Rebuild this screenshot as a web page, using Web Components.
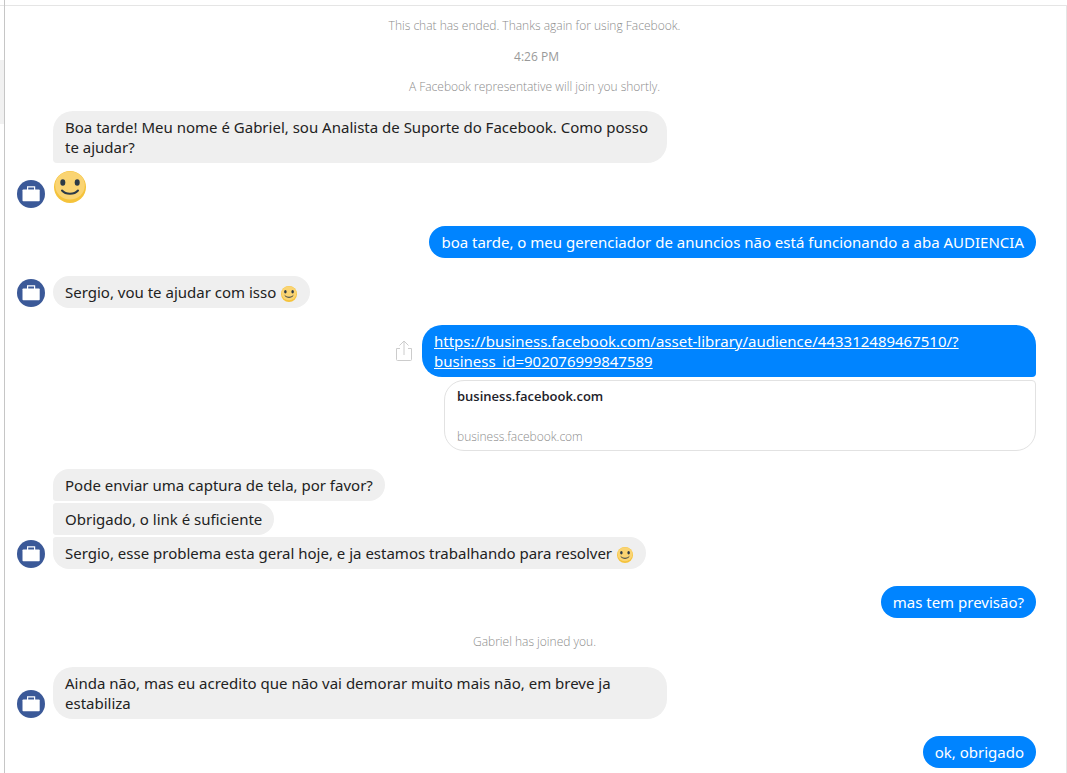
<!DOCTYPE html>
<html lang="pt-BR">
<head>
<meta charset="utf-8">
<meta name="viewport" content="width=device-width, initial-scale=1">
<title>Chat</title>
<style>
  html, body { margin: 0; }
  body {
    background: #fff;
    color: #000;
    font-family: "Noto Sans", "Open Sans", sans-serif;
    font-size: 15px;
    line-height: 20px;
  }
</style>
</head>
<body>
<chat-window>
  <chat-notices>
    <chat-notice>This chat has ended. Thanks again for using Facebook.</chat-notice>
    <chat-notice time>4:26 PM</chat-notice>
    <chat-notice>A Facebook representative will join you shortly.</chat-notice>
  </chat-notices>

  <chat-received>
    <chat-bubble class="first">Boa tarde! Meu nome é Gabriel, sou Analista de Suporte do Facebook. Como posso te ajudar?</chat-bubble>
    <chat-smiley large></chat-smiley>
  </chat-received>

  <chat-sent><chat-bubble sent>boa tarde, o meu gerenciador de anuncios não está funcionando a aba AUDIENCIA</chat-bubble></chat-sent>

  <chat-received>
    <chat-bubble>Sergio, vou te ajudar com isso <chat-smiley></chat-smiley></chat-bubble>
  </chat-received>

  <chat-sent>
    <chat-share slot="action"></chat-share>
    <chat-bubble sent class="first"><a href="https://business.facebook.com/asset-library/audience/443312489467510/?business_id=902076999847589" style="color:inherit">https://business.facebook.com/asset-library/audience/443312489467510/?<wbr>business_id=902076999847589</a></chat-bubble>
    <link-card slot="card" heading="business.facebook.com" source="business.facebook.com"></link-card>
  </chat-sent>

  <chat-received>
    <chat-bubble class="first">Pode enviar uma captura de tela, por favor?</chat-bubble>
    <chat-bubble class="middle">Obrigado, o link é suficiente</chat-bubble>
    <chat-bubble class="last">Sergio, esse problema esta geral hoje, e ja estamos trabalhando para resolver <chat-smiley></chat-smiley></chat-bubble>
  </chat-received>

  <chat-sent><chat-bubble sent>mas tem previsão?</chat-bubble></chat-sent>

  <chat-notice>Gabriel has joined you.</chat-notice>

  <chat-received>
    <chat-bubble>Ainda não, mas eu acredito que não vai demorar muito mais não, em breve ja estabiliza</chat-bubble>
  </chat-received>

  <chat-sent><chat-bubble sent>ok, obrigado</chat-bubble></chat-sent>
</chat-window>

<script>
const define = (name, html, setup) => {
  const template = document.createElement('template');
  template.innerHTML = html;
  customElements.define(name, class extends HTMLElement {
    constructor() {
      super();
      this.attachShadow({ mode: 'open' }).append(template.content.cloneNode(true));
    }
    connectedCallback() { if (setup) setup(this); }
  });
};

define('chat-window', `
  <style>
    :host { display: grid; grid-template-columns: 4px 1fr; min-height: 100vh; }
    .cap { height: 5px; border-bottom: 1px solid #e5e5e5; }
    .thumb { height: 64px; margin-top: 54px; background: #f1f1f1; }
    .panel { display: flex; flex-direction: column; border-left: 1px solid #c6c6c6; min-width: 0; }
    main {
      flex: 1; display: flex; flex-direction: column; gap: 17px;
      padding: 13px 30px 5px 12px; border-right: 1px solid #e5e5e5;
    }
  </style>
  <aside><div class="cap"></div><div class="thumb"></div></aside>
  <div class="panel"><div class="cap"></div><main><slot></slot></main></div>
`);

define('chat-notices', `
  <style>:host { display: flex; flex-direction: column; gap: 16px; margin-bottom: -1px; }</style>
  <slot></slot>
`);

define('chat-notice', `
  <style>
    :host {
      display: block; text-align: center; padding-left: 16px;
      font-family: "Open Sans", "Noto Sans", sans-serif;
      font-size: 12px; line-height: 14px; font-weight: 300; color: #8c8c8c;
    }
    :host([time]) { padding: 1px 0 0 20px; font-weight: 400; color: #999; }
  </style>
  <slot></slot>
`);

define('chat-avatar', `
  <style>:host, svg { display: block; width: 28px; height: 28px; }</style>
  <svg viewBox="0 0 28 28" aria-hidden="true">
    <circle cx="14" cy="14" r="14" fill="#3b5998"/>
    <path d="M10.600 10V6.800h7V10" fill="none" stroke="#fff" stroke-width="1.200"/>
    <rect x="5.500" y="9.400" width="17.200" height="11.800" rx=".8" fill="#fff"/>
  </svg>
`);

define('chat-received', `
  <style>
    :host { display: flex; align-items: flex-end; gap: 8px; padding-top: 1px; color: #222; }
    chat-avatar { flex: none; margin-bottom: 1px; }
    .stack { display: flex; flex-direction: column; align-items: flex-start; gap: 2px; min-width: 0; }
  </style>
  <chat-avatar></chat-avatar>
  <div class="stack"><slot></slot></div>
`);

define('chat-sent', `
  <style>
    :host { display: flex; flex-direction: column; align-items: flex-end; gap: 3px; }
    .row { display: flex; align-items: center; justify-content: flex-end; gap: 9px; max-width: 100%; }
  </style>
  <div class="row"><slot name="action"></slot><slot></slot></div>
  <slot name="card"></slot>
`);

define('chat-bubble', `
  <style>
    :host {
      display: block; box-sizing: border-box; max-width: 614px;
      padding: 6px 12px; border-radius: 20px; background: #efefef;
      overflow-wrap: anywhere;
    }
    :host(.first) { border-bottom-left-radius: 4px; }
    :host(.middle) { border-top-left-radius: 4px; border-bottom-left-radius: 4px; }
    :host(.last) { border-top-left-radius: 4px; }
    :host([sent]) { background: #0084ff; color: #fff; }
    :host([sent].first) { border-bottom-left-radius: 20px; border-bottom-right-radius: 4px; }
  </style>
  <slot></slot>
`);

define('chat-smiley', `
  <style>
    :host { display: inline-block; width: 16px; height: 16px; margin: 0 1px; vertical-align: -4px; line-height: 0; }
    :host([large]) { display: block; width: 32px; height: 32px; margin: 6px 1px; }
    svg { display: block; width: 100%; height: 100%; }
  </style>
  <svg viewBox="0 0 32 32" role="img" aria-label="smile">
    <circle cx="16" cy="16" r="16" fill="#f5c33b"/>
    <ellipse cx="16" cy="14.500" rx="14.800" ry="14" fill="#fad472"/>
    <ellipse cx="8.800" cy="11.500" rx="2.500" ry="3.300" fill="#2c3a47"/>
    <ellipse cx="23.200" cy="11.500" rx="2.500" ry="3.300" fill="#2c3a47"/>
    <path d="M8 19.500c3.800 4.300 12.200 4.300 16 0" fill="none" stroke="#2c3a47" stroke-width="2" stroke-linecap="round"/>
  </svg>
`);

define('chat-share', `
  <style>
    :host { display: block; flex: none; }
    button { display: block; padding: 0; border: 0; background: none; cursor: pointer; }
    svg { display: block; }
  </style>
  <button type="button" aria-label="Share">
    <svg width="18" height="22" viewBox="0 0 18 22" fill="none" stroke="#ccc">
      <path d="M5 8.500H1.500v11q0 1 1 1h13q1 0 1-1v-11H13"/>
      <path d="M9 15V1M4.500 5.500 9 1l4.500 4.500"/>
    </svg>
  </button>
`);

define('link-card', `
  <style>
    :host {
      display: block; box-sizing: border-box; width: 592px; max-width: 100%;
      padding: 6px 12px 5px; border: 1px solid #e2e2e2; border-radius: 20px; border-top-right-radius: 4px;
      font-family: "Open Sans", "Noto Sans", sans-serif;
    }
    a { display: flex; flex-direction: column; gap: 24px; color: inherit; text-decoration: none; }
    .heading { font-size: 13px; line-height: 18px; font-weight: 600; color: #1d2129; }
    .source { font-size: 12px; line-height: 16px; font-weight: 300; color: #8c8c8c; }
  </style>
  <a href="https://business.facebook.com/"><span class="heading"></span><span class="source"></span></a>
`, el => {
  el.shadowRoot.querySelector('.heading').textContent = el.getAttribute('heading');
  el.shadowRoot.querySelector('.source').textContent = el.getAttribute('source');
});
</script>
</body>
</html>
